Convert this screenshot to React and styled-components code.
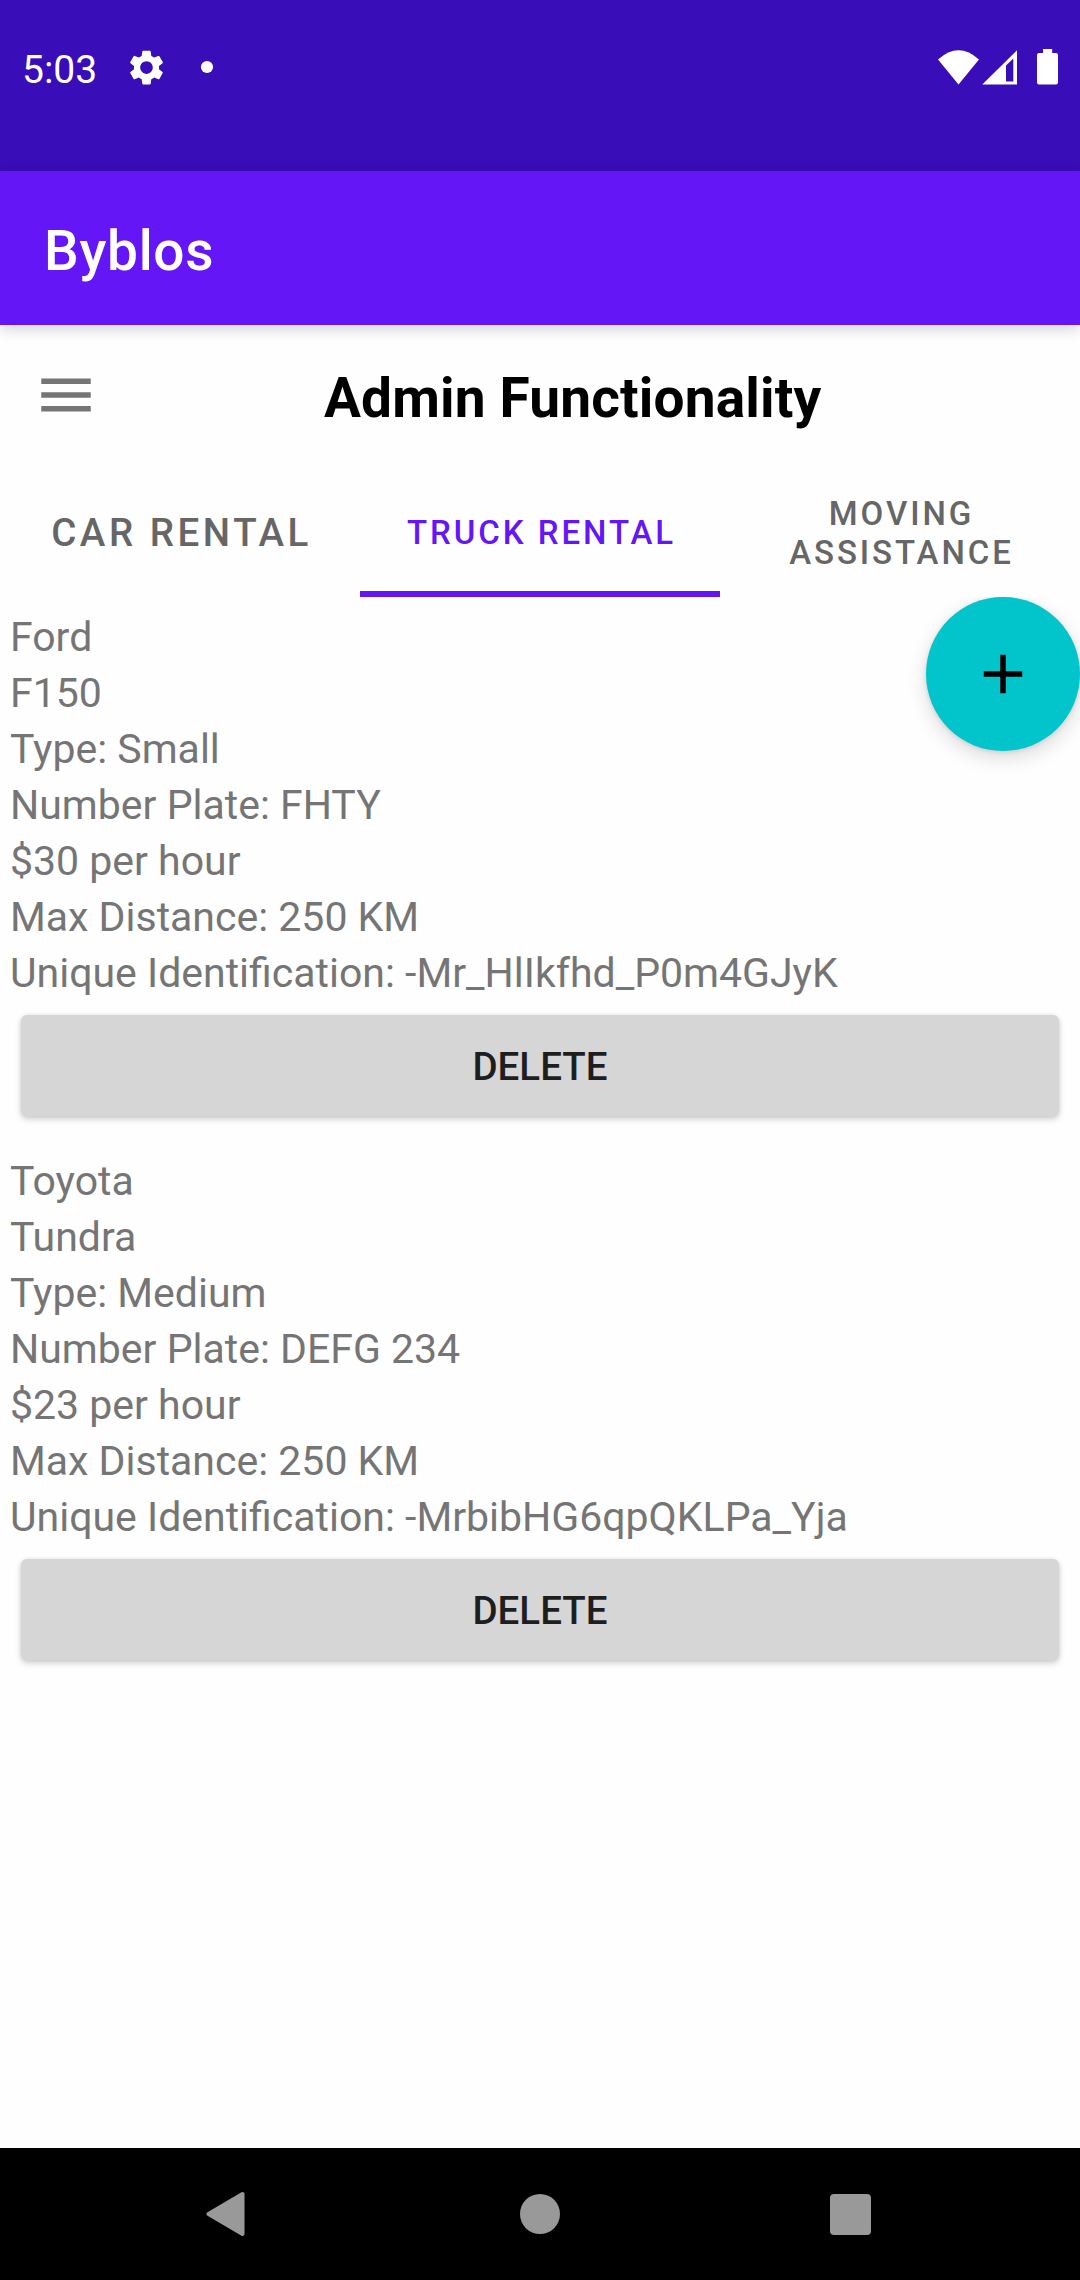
import React from "react";
import styled, { createGlobalStyle } from "styled-components";

const GlobalStyle = createGlobalStyle`
  * { box-sizing: border-box; }
  body { margin: 0; background: #fefefe; }
`;

const Screen = styled.div`
  display: flex;
  flex-direction: column;
  width: 1080px;
  height: 2280px;
  overflow: hidden;
  background: #fefefe;
  font-family: Roboto, "Liberation Sans", sans-serif;
`;

const StatusBar = styled.div`
  display: flex;
  justify-content: space-between;
  height: 171px;
  padding: 48px 21px 0 22px;
  background: #390db7;
  color: #fff;
`;

const StatusGroup = styled.div`
  display: flex;
  align-items: flex-start;
  height: 40px;
`;

const Clock = styled.span`
  width: 105px;
  font-size: 39px;
  line-height: 45px;
`;

const AppBar = styled.header`
  position: relative;
  z-index: 1;
  display: flex;
  align-items: center;
  height: 154px;
  padding: 6px 44px 0;
  background: #6416f7;
  box-shadow: 0 4px 14px rgba(0, 0, 0, 0.17);
  color: #fff;
  font-size: 55px;
  font-weight: 500;
  letter-spacing: 0.0125em;
`;

const TitleRow = styled.div`
  display: flex;
  align-items: center;
  height: 140px;
  padding-left: 33px;
`;

const MenuButton = styled.button`
  display: flex;
  padding: 0;
  border: 0;
  background: none;
`;

const PageTitle = styled.h1`
  margin: 0 0 0 225px;
  padding-top: 6px;
  color: #000;
  font-size: 55px;
  font-weight: 700;
  letter-spacing: 0.15px;
  white-space: nowrap;
`;

const Tabs = styled.nav`
  display: grid;
  grid-template-columns: repeat(3, 1fr);
  height: 132px;
`;

const Tab = styled.button`
  display: flex;
  align-items: center;
  justify-content: center;
  padding: ${(p) => (p.$active ? "9px 31px 0 34px" : "3px 31px 0 34px")};
  border: 0;
  border-bottom: ${(p) => (p.$active ? "6px solid #6416f7" : "0")};
  background: none;
  color: ${(p) => (p.$active ? "#6416f7" : "#666")};
  font-family: inherit;
  font-size: ${(p) => p.$size}px;
  font-weight: 500;
  letter-spacing: ${(p) => (p.$size > 33 ? "3.55px" : "2.95px")};
  line-height: 39px;
  text-transform: uppercase;
  white-space: ${(p) => (p.$wrap ? "normal" : "nowrap")};
`;

const Content = styled.main`
  position: relative;
  flex: 1;
  display: flex;
  flex-direction: column;
  gap: 37px;
  padding-top: 12px;
  overflow: hidden;
`;

const Vehicle = styled.article`
  display: flex;
  flex-direction: column;
`;

const Line = styled.p`
  margin: 0;
  padding-left: 10px;
  color: #757575;
  font-size: 41px;
  line-height: 56px;
  white-space: nowrap;
`;

const DeleteButton = styled.button`
  height: 101px;
  margin: 14px 21px 0;
  padding: 2px 0 0;
  border: 0;
  border-radius: 6px;
  background: #d6d6d6;
  box-shadow: 0 3px 6px rgba(0, 0, 0, 0.2), 0 0 4px rgba(0, 0, 0, 0.06);
  color: #1e1e1e;
  font-family: inherit;
  font-size: 38.5px;
  font-weight: 500;
  text-transform: uppercase;
`;

const AddButton = styled.button`
  position: absolute;
  top: 0;
  right: 0;
  display: flex;
  align-items: center;
  justify-content: center;
  width: 154px;
  height: 154px;
  padding: 0;
  border: 0;
  border-radius: 50%;
  background: #02c5cb;
  box-shadow: 0 7px 20px rgba(0, 0, 0, 0.14), 0 1px 4px rgba(0, 0, 0, 0.12);
`;

const NavBar = styled.footer`
  display: flex;
  justify-content: space-between;
  align-items: center;
  height: 132px;
  padding: 0 209px 0 206px;
  background: #000;
`;

const vehicles = [
  {
    make: "Ford",
    model: "F150",
    type: "Small",
    plate: "FHTY",
    rate: 30,
    distance: 250,
    id: "-Mr_HlIkfhd_P0m4GJyK",
  },
  {
    make: "Toyota",
    model: "Tundra",
    type: "Medium",
    plate: "DEFG 234",
    rate: 23,
    distance: 250,
    id: "-MrbibHG6qpQKLPa_Yja",
  },
];

const StatusIcons = () => (
  <svg width="122" height="40" viewBox="937 48 122 40" fill="#fff">
    <path d="M938 59.5 Q958.5 41 979 59.5 L958.5 84.5 Z" />
    <path
      fillRule="evenodd"
      d="M982.3 84.6 L1017 50.2 V84.6 Z M1006 65.6 V81.5 H1013.3 V58.6 Z"
    />
    <path d="M1043 49 H1052.2 V53 H1056 Q1058 53 1058 55 V82.5 Q1058 84.6 1056 84.6 H1039 Q1037 84.6 1037 82.5 V55 Q1037 53 1039 53 H1043 Z" />
  </svg>
);

const NoticeIcons = () => (
  <svg width="90" height="40" viewBox="127 48 90 40" fill="#fff">
    <path
      transform="translate(125.5 46.6) scale(1.75)"
      d="M19.14 12.94c.04-.3.06-.61.06-.94 0-.32-.02-.64-.07-.94l2.03-1.58c.18-.14.23-.41.12-.61l-1.92-3.32c-.12-.22-.37-.29-.59-.22l-2.39.96c-.5-.38-1.03-.7-1.62-.94l-.36-2.54c-.04-.24-.24-.41-.48-.41h-3.84c-.24 0-.43.17-.47.41l-.36 2.54c-.59.24-1.13.57-1.62.94l-2.39-.96c-.22-.08-.47 0-.59.22L2.74 8.87c-.12.21-.08.47.12.61l2.03 1.58c-.05.3-.09.63-.09.94s.02.64.07.94l-2.03 1.58c-.18.14-.23.41-.12.61l1.92 3.32c.12.22.37.29.59.22l2.39-.96c.5.38 1.03.7 1.62.94l.36 2.54c.05.24.24.41.48.41h3.84c.24 0 .44-.17.47-.41l.36-2.54c.59-.24 1.13-.56 1.62-.94l2.39.96c.22.08.47 0 .59-.22l1.92-3.32c.12-.22.07-.47-.12-.61l-2.01-1.58zM12 15.6c-1.98 0-3.6-1.62-3.6-3.6s1.62-3.6 3.6-3.6 3.6 1.62 3.6 3.6-1.62 3.6-3.6 3.6z"
    />
    <circle cx="207" cy="67" r="6.1" />
  </svg>
);

const MenuIcon = () => (
  <svg width="66" height="66" viewBox="0 0 24 24" fill="#757575">
    <path d="M3 18h18v-2H3v2zm0-5h18v-2H3v2zm0-7v2h18V6H3z" />
  </svg>
);

const PlusIcon = () => (
  <svg width="66" height="66" viewBox="0 0 24 24" fill="#000">
    <path d="M19 13h-6v6h-2v-6H5v-2h6V5h2v6h6v2z" />
  </svg>
);

const BackIcon = () => (
  <svg width="44" height="46" viewBox="0 0 44 46">
    <path
      d="M2.5 23 L36.5 3 V43 Z"
      fill="#999"
      stroke="#999"
      strokeWidth="4"
      strokeLinejoin="round"
    />
  </svg>
);

const HomeIcon = () => (
  <svg width="40" height="40" viewBox="0 0 40 40">
    <circle cx="20" cy="20" r="20" fill="#999" />
  </svg>
);

const RecentsIcon = () => (
  <svg width="41" height="41" viewBox="0 0 41 41">
    <rect width="41" height="41" rx="4" fill="#999" />
  </svg>
);

export default function App() {
  return (
    <Screen>
      <GlobalStyle />
      <StatusBar>
        <StatusGroup>
          <Clock>5:03</Clock>
          <NoticeIcons />
        </StatusGroup>
        <StatusGroup>
          <StatusIcons />
        </StatusGroup>
      </StatusBar>
      <AppBar>Byblos</AppBar>
      <TitleRow>
        <MenuButton aria-label="Menu">
          <MenuIcon />
        </MenuButton>
        <PageTitle>Admin Functionality</PageTitle>
      </TitleRow>
      <Tabs>
        <Tab $size={38.5}>Car Rental</Tab>
        <Tab $size={33} $active>
          Truck Rental
        </Tab>
        <Tab $size={33} $wrap>
          Moving Assistance
        </Tab>
      </Tabs>
      <Content>
        {vehicles.map((v) => (
          <Vehicle key={v.id}>
            <Line>{v.make}</Line>
            <Line>{v.model}</Line>
            <Line>{`Type: ${v.type}`}</Line>
            <Line>{`Number Plate: ${v.plate}`}</Line>
            <Line>{`$${v.rate} per hour`}</Line>
            <Line>{`Max Distance: ${v.distance} KM`}</Line>
            <Line>{`Unique Identification: ${v.id}`}</Line>
            <DeleteButton>Delete</DeleteButton>
          </Vehicle>
        ))}
        <AddButton aria-label="Add">
          <PlusIcon />
        </AddButton>
      </Content>
      <NavBar>
        <BackIcon />
        <HomeIcon />
        <RecentsIcon />
      </NavBar>
    </Screen>
  );
}
